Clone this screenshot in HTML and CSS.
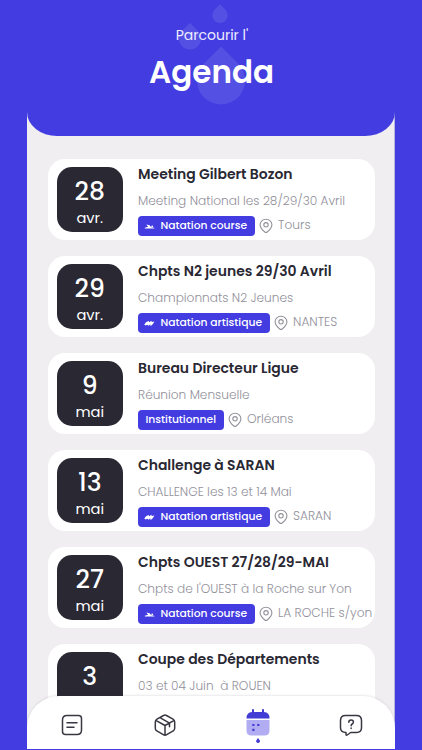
FILE: index.html
```
<!DOCTYPE html>
<html lang="fr">
<head>
<meta charset="utf-8">
<title>Agenda</title>
<link rel="stylesheet" href="styles.css">
</head>
<body>
<svg class="defs" aria-hidden="true">
  <symbol id="pin" viewBox="0 0 14 16"><path d="M7 1.200c3.300 0 5.900 2.400 5.900 5.600 0 2.600-2.200 5.200-4.700 7.200a1.900 1.900 0 0 1-2.400 0C3.300 12 1.100 9.400 1.100 6.800 1.100 3.600 3.700 1.200 7 1.200z"/><circle cx="7" cy="6.800" r="2.200"/></symbol>
  <symbol id="swim" viewBox="0 0 11 7"><path d="M2.500 1.500 5.600 2.300 7 3.900l1 .5 2.300.4v.8H.8v-.8l3.400-1L3 2.500z"/><circle cx="8.200" cy="3.500" r=".9"/></symbol>
  <symbol id="artistic" viewBox="0 0 11 7"><path d="M.3 4.500 2 2.200 4.600 1 5.300 2.300 7.300.8 7.800 2l2.700-.6L8.700 4.300 6.600 6.300 6.300 4.300 4.600 5.700 3.300 4.700 1.400 5.500z"/></symbol>
</svg>
<div class="app">
  <header class="header">
    <svg class="drops" viewBox="0 0 70 104"><path d="M42 2.300l5.400 5.500a7.700 7.700 0 1 1-10.800 0zM12 21l7.800 7.700a11 11 0 1 1-15.600 0zM43 44.500l17 17a24 24 0 1 1-34 0z"/></svg>
    <p class="eyebrow">Parcourir l'</p>
    <h1 class="heading">Agenda</h1>
  </header>
  <main class="list">
    <article class="card">
      <div class="date"><span class="day">28</span><span class="month">avr.</span></div>
      <div class="info">
        <h2 class="title">Meeting Gilbert Bozon</h2>
        <p class="desc">Meeting National les 28/29/30 Avril</p>
        <div class="meta"><span class="tag"><svg class="tag-icon"><use href="#swim"/></svg>Natation course</span><svg class="pin"><use href="#pin"/></svg><span class="place">Tours</span></div>
      </div>
    </article>
    <article class="card">
      <div class="date"><span class="day">29</span><span class="month">avr.</span></div>
      <div class="info">
        <h2 class="title">Chpts N2 jeunes 29/30 Avril</h2>
        <p class="desc">Championnats N2 Jeunes</p>
        <div class="meta"><span class="tag"><svg class="tag-icon"><use href="#artistic"/></svg>Natation artistique</span><svg class="pin"><use href="#pin"/></svg><span class="place">NANTES</span></div>
      </div>
    </article>
    <article class="card">
      <div class="date"><span class="day">9</span><span class="month">mai</span></div>
      <div class="info">
        <h2 class="title">Bureau Directeur Ligue</h2>
        <p class="desc">Réunion Mensuelle</p>
        <div class="meta"><span class="tag tag-plain">Institutionnel</span><svg class="pin"><use href="#pin"/></svg><span class="place">Orléans</span></div>
      </div>
    </article>
    <article class="card">
      <div class="date"><span class="day">13</span><span class="month">mai</span></div>
      <div class="info">
        <h2 class="title">Challenge à SARAN</h2>
        <p class="desc">CHALLENGE les 13 et 14 Mai</p>
        <div class="meta"><span class="tag"><svg class="tag-icon"><use href="#artistic"/></svg>Natation artistique</span><svg class="pin"><use href="#pin"/></svg><span class="place">SARAN</span></div>
      </div>
    </article>
    <article class="card">
      <div class="date"><span class="day">27</span><span class="month">mai</span></div>
      <div class="info">
        <h2 class="title">Chpts OUEST 27/28/29-MAI</h2>
        <p class="desc">Chpts de l'OUEST à la Roche sur Yon</p>
        <div class="meta"><span class="tag"><svg class="tag-icon"><use href="#swim"/></svg>Natation course</span><svg class="pin"><use href="#pin"/></svg><span class="place">LA ROCHE s/yon</span></div>
      </div>
    </article>
    <article class="card">
      <div class="date"><span class="day">3</span></div>
      <div class="info">
        <h2 class="title">Coupe des Départements</h2>
        <p class="desc">03 et 04 Juin&nbsp; à ROUEN</p>
      </div>
    </article>
  </main>
  <nav class="nav">
    <a class="nav-item"><svg class="icon" viewBox="0 0 24 24"><path d="M7 2.500h11.500q3 0 3 3V17q0 4.500-4.500 4.500H5.500q-3 0-3-3V7q0-4.500 4.500-4.500zM7 9.800h10M7 14.300h7"/></svg></a>
    <a class="nav-item"><svg class="icon" viewBox="0 0 24 24"><path d="M10.500 2.500q1.500-.9 3 0l6.500 3.700q1.700 1 1.700 2.800v6.300q0 1.700-1.500 2.600l-6.500 3.800q-1.700 1-3.400 0l-6.500-3.800q-1.500-.9-1.500-2.600V9q0-1.800 1.700-2.800zM2.800 7.300 12 12.500l9.200-5.200M12 12.500V22M7 4.700l9.500 5.500v3.500"/></svg></a>
    <a class="nav-item"><svg class="icon-calendar" viewBox="0 0 24 36"><path class="cal-body" d="M.5 12h23v10.500q0 5-5 5h-13q-5 0-5-5z"/><path class="cal-top" d="M.5 10.500Q.5 4 6 4V2q0-1 1-1t1 1v2h8V2q0-1 1-1t1 1v2q5.500 0 5.500 6.500z"/><path class="cal-top" d="M6.300 15.900h2.200v2.200H6.300zM11.200 15.900h2.200v2.200h-2.200zM6.300 20.700h2.200v2.200H6.300zM12 30l1.700 2.200a1.900 1.900 0 1 1-3.300 0z"/></svg></a>
    <a class="nav-item"><svg class="icon" viewBox="0 0 24 24"><path d="M6.500 2.500h11q5 0 5 5v7.300q0 4.700-5 4.700h-5.800L8.200 22q-1.200.8-1.200-.7v-1.800q-5.500 0-5.500-4.700V7.500q0-5 5-5z"/><path d="M9.800 9.300q0-2.300 2.300-2.300t2.300 2.100q0 1.200-1.200 1.900-1.100.7-1.100 1.800M12.100 15v.6"/></svg></a>
  </nav>
</div>
</body>
</html>
```
FILE: styles.css
```
* { box-sizing: border-box; }
body {
  margin: 0;
  width: 422px;
  height: 750px;
  overflow: hidden;
  background: #423ce1;
  font-family: Poppins, Inter, sans-serif;
}
h1, h2, p { margin: 0; }
.defs { position: absolute; width: 0; height: 0; }
.app {
  position: relative;
  width: 368px;
  height: 749px;
  margin-left: 27px;
  overflow: hidden;
  background: #f0eef1;
  box-shadow: inset -1px 0 #b7b5df;
}
.header {
  position: relative;
  height: 136px;
  padding-top: 25px;
  background: #423ce1;
  border-radius: 0 0 30px 30px / 0 0 24px 24px;
  color: #fff;
  text-align: center;
}
.drops {
  position: absolute;
  left: 151px;
  top: 2px;
  width: 70px;
  height: 104px;
  fill: #fff;
  opacity: .1;
}
.eyebrow { position: relative; font-size: 14px; line-height: 20px; color: #eeedff; padding-left: 2px; }
.heading { position: relative; font-size: 31px; line-height: 40px; font-weight: 600; padding-left: 1px; margin-top: 7px; }
.list {
  display: flex;
  flex-direction: column;
  gap: 16px;
  padding: 23px 20px 0 21px;
}
.card {
  display: flex;
  flex: none;
  gap: 15.500px;
  height: 81px;
  padding: 0 0 0 9px;
  border-radius: 17px;
  background: #fff;
}
.date {
  display: flex;
  flex-direction: column;
  align-items: center;
  width: 65.500px;
  height: 65.500px;
  margin-top: 7.500px;
  padding-top: 11px;
  border-radius: 15px;
  background: #292833;
  color: #fff;
}
.day { font-size: 25px; line-height: 28px; font-weight: 500; }
.month { font-size: 14.700px; line-height: 25px; }
.info { padding-top: 5px; white-space: nowrap; }
.title { font-size: 13.950px; line-height: 20px; font-weight: 600; color: #292833; }
.desc { margin-top: 7px; font-size: 12.150px; line-height: 20px; font-weight: 300; color: #92919b; }
.meta { display: flex; align-items: center; margin-top: 5px; height: 20px; }
.tag {
  display: flex;
  align-items: center;
  height: 20px;
  padding: 0 7.500px 1px 6px;
  border-radius: 4px;
  background: #423ce1;
  color: #fff;
  font-size: 10.750px;
  font-weight: 500;
}
.tag-plain { padding-left: 7.500px; }
.tag-icon { width: 11px; height: 7px; margin: 2px 5.500px 0 0; fill: #fff; }
.pin { width: 14px; height: 16px; margin: 0 5px 0 4.500px; fill: none; stroke: #92919b; stroke-width: 1.1; }
.place { font-size: 12.200px; line-height: 20px; font-weight: 300; color: #92919b; margin-top: -2px; }
.nav {
  position: absolute;
  left: 0;
  right: 0;
  bottom: 0;
  height: 53px;
  display: flex;
  justify-content: space-between;
  padding: 12px 32px 0 33px;
  border-radius: 32px 32px 0 0;
  background: #fff;
  box-shadow: 0 -1px 2px rgba(70, 65, 90, .12);
}
.nav-item { display: flex; width: 24px; height: 36px; }
.icon {
  width: 24px;
  height: 24px;
  margin-top: 5px;
  fill: none;
  stroke: #393842;
  stroke-width: 1.5;
  stroke-linecap: round;
  stroke-linejoin: round;
}
.icon-calendar { width: 24px; height: 36px; }
.cal-body { fill: #b2adf2; }
.cal-top { fill: #423cd5; }
```
